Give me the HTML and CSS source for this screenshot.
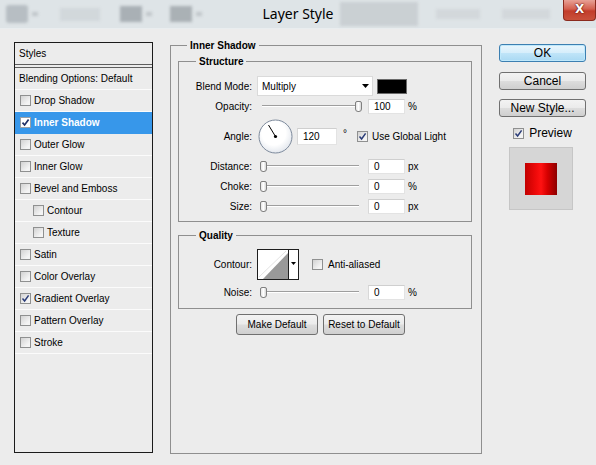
FILE: index.html
```html
<!DOCTYPE html>
<html>
<head>
<meta charset="utf-8">
<title>Layer Style</title>
<link rel="stylesheet" href="styles.css">
</head>
<body>
<div class="titlebar">
  <div class="tb-side tb-left">
    <span class="blur ic1"></span><span class="blur ar"></span>
    <span class="blur f1"></span>
    <span class="blur b1"></span><span class="blur ar"></span>
    <span class="blur b2"></span><span class="blur ar"></span>
  </div>
  <div class="tb-title">Layer Style</div>
  <div class="tb-side tb-right">
    <span class="blur r1"></span>
    <span class="blur r2"></span>
    <span class="blur r3"></span>
    <div class="tb-close">X</div>
  </div>
</div>

<div class="dialog">
  <div class="styles-list">
    <div class="list-head">Styles</div>
    <div class="list-body">
      <div class="row plain">Blending Options: Default</div>
      <div class="row"><span class="cb"></span>Drop Shadow</div>
      <div class="row active"><span class="cb on"><svg viewBox="0 0 9 9" width="9" height="9"><path d="M1.5 4.6 L3.6 7 L7.6 1.4" fill="none" stroke="#1f2f66" stroke-width="1.7"/></svg></span>Inner Shadow</div>
      <div class="row"><span class="cb"></span>Outer Glow</div>
      <div class="row"><span class="cb"></span>Inner Glow</div>
      <div class="row"><span class="cb"></span>Bevel and Emboss</div>
      <div class="row sub"><span class="cb"></span>Contour</div>
      <div class="row sub"><span class="cb"></span>Texture</div>
      <div class="row"><span class="cb"></span>Satin</div>
      <div class="row"><span class="cb"></span>Color Overlay</div>
      <div class="row"><span class="cb"><svg viewBox="0 0 9 9" width="9" height="9"><path d="M1.5 4.6 L3.6 7 L7.6 1.4" fill="none" stroke="#2a3c78" stroke-width="1.5"/></svg></span>Gradient Overlay</div>
      <div class="row"><span class="cb"></span>Pattern Overlay</div>
      <div class="row"><span class="cb"></span>Stroke</div>
    </div>
  </div>

  <fieldset class="group main">
    <legend class="lg-main">Inner Shadow</legend>

    <fieldset class="group structure">
      <legend>Structure</legend>
      <div class="f-row r-first">
        <span class="lbl">Blend Mode:</span>
        <div class="select"><span>Multiply</span><svg class="dd" width="7" height="4" viewBox="0 0 7 4"><polygon points="0,0 7,0 3.5,4" fill="#000"/></svg></div>
        <span class="swatch"></span>
      </div>
      <div class="f-row">
        <span class="lbl">Opacity:</span>
        <div class="slider"><span class="thumb max"></span></div>
        <span class="num">100</span><span class="unit">%</span>
      </div>
      <div class="f-row r-angle">
        <span class="lbl">Angle:</span>
        <svg class="dial" width="35" height="35" viewBox="0 0 35 35">
          <defs><radialGradient id="dg" cx="0.45" cy="0.4" r="0.6"><stop offset="0.6" stop-color="#ffffff"/><stop offset="1" stop-color="#e4e8ee"/></radialGradient></defs>
          <circle cx="17.5" cy="17.5" r="16.5" fill="url(#dg)" stroke="#7d8a9c" stroke-width="1"/>
          <line x1="17.5" y1="17.5" x2="10.5" y2="6" stroke="#000" stroke-width="1"/>
          <circle cx="17.5" cy="17.5" r="1.6" fill="#000"/>
        </svg>
        <span class="num angle">120</span>
        <span class="deg">°</span>
        <span class="cb gl"><svg viewBox="0 0 9 9" width="9" height="9"><path d="M1.5 4.6 L3.6 7 L7.6 1.4" fill="none" stroke="#2a3c78" stroke-width="1.5"/></svg></span>
        <span class="cb-text">Use Global Light</span>
      </div>
      <div class="f-row">
        <span class="lbl">Distance:</span>
        <div class="slider"><span class="thumb min"></span></div>
        <span class="num">0</span><span class="unit">px</span>
      </div>
      <div class="f-row">
        <span class="lbl">Choke:</span>
        <div class="slider"><span class="thumb min"></span></div>
        <span class="num">0</span><span class="unit">%</span>
      </div>
      <div class="f-row">
        <span class="lbl">Size:</span>
        <div class="slider"><span class="thumb min"></span></div>
        <span class="num">0</span><span class="unit">px</span>
      </div>
    </fieldset>

    <fieldset class="group quality">
      <legend>Quality</legend>
      <div class="f-row r-contour">
        <span class="lbl">Contour:</span>
        <svg class="contour" width="42" height="31" viewBox="0 0 42 31">
          <rect x="0.5" y="0.5" width="41" height="30" fill="#fff" stroke="#1e1e1e"/>
          <line x1="2" y1="28" x2="29" y2="2" stroke="#e2e2e2" stroke-width="1"/>
          <polygon points="6,30 31,4 31,30" fill="#999"/>
          <line x1="31.5" y1="1" x2="31.5" y2="30" stroke="#1e1e1e"/>
          <polygon points="34,13 39,13 36.5,16" fill="#000"/>
        </svg>
        <span class="cb aa"></span>
        <span class="cb-text">Anti-aliased</span>
      </div>
      <div class="f-row r-noise">
        <span class="lbl">Noise:</span>
        <div class="slider"><span class="thumb min"></span></div>
        <span class="num">0</span><span class="unit">%</span>
      </div>
    </fieldset>

    <div class="btn-row">
      <button class="btn">Make Default</button>
      <button class="btn">Reset to Default</button>
    </div>
  </fieldset>

  <div class="side">
    <button class="btn sbtn ok">OK</button>
    <button class="btn sbtn cancel">Cancel</button>
    <button class="btn sbtn newst">New Style...</button>
    <div class="preview-row">
      <span class="cb"><svg viewBox="0 0 9 9" width="9" height="9"><path d="M1.5 4.6 L3.6 7 L7.6 1.4" fill="none" stroke="#2a3c78" stroke-width="1.5"/></svg></span>
      <span>Preview</span>
    </div>
    <div class="preview-box"><div class="red"></div></div>
  </div>
</div>
</body>
</html>
```

FILE: styles.css
```css
* { box-sizing: border-box; }
html, body { margin: 0; padding: 0; }
body {
  width: 596px;
  height: 465px;
  overflow: hidden;
  background: #ececec;
  font-family: "Liberation Sans", Arial, sans-serif;
  font-size: 10px;
  color: #000;
}

/* ---------- title bar ---------- */
.titlebar {
  height: 29px;
  display: flex;
  background: #dee4e7;
  border-bottom: 1px solid #e9edef;
}
.tb-side { flex: 1 1 0; display: flex; align-items: center; min-width: 0; }
.tb-title {
  font-family: "Noto Sans", "Open Sans", sans-serif;
  font-size: 14px;
  line-height: 28px;
  color: #000;
  white-space: nowrap;
}
.blur { flex: none; filter: blur(1.6px); display: block; }
.ic1 { width: 22px; height: 18px; background: #b7bec3; margin-left: 6px; border-radius: 3px; }
.ar { width: 6px; height: 4px; background: #bfc5c9; margin-left: 4px; }
.f1 { width: 40px; height: 13px; background: #d2d8db; margin-left: 22px; }
.b1 { width: 22px; height: 16px; background: #a9b0b5; margin-left: 20px; }
.b2 { width: 22px; height: 16px; background: #aab1b5; margin-left: 18px; }
.r1 { width: 78px; height: 24px; background: #cad0d3; margin-left: 6px; }
.r2 { width: 44px; height: 10px; background: #d3d8db; margin-left: 18px; }
.r3 { width: 48px; height: 10px; background: #d3d8db; margin-left: 22px; }
.tb-close {
  margin-left: auto;
  align-self: flex-start;
  flex: none;
  width: 33px;
  height: 21px;
  border: 1px solid #8a2a1e;
  border-top: 0;
  border-radius: 0 0 4px 4px;
  background: linear-gradient(#e8a196, #d4604f 45%, #c23d2b 55%, #c9513b);
  color: #fff;
  font-family: "DejaVu Sans", sans-serif;
  font-weight: bold;
  font-size: 12px;
  line-height: 19px;
  text-align: center;
  text-shadow: 0 0 2px #5a0e06, 0 0 1px #5a0e06;
}

/* ---------- dialog layout ---------- */
.dialog { display: flex; align-items: flex-start; padding-left: 14px; }

/* ---------- styles list ---------- */
.styles-list {
  margin-top: 13px;
  width: 139px;
  height: 411px;
  border: 1px solid #1b1b1b;
  background: #ececec;
  flex: none;
}
.list-head {
  height: 22px;
  line-height: 21px;
  padding-left: 4px;
  border-bottom: 1px solid #5e5e5e;
}
.list-body { margin-top: 2px; border-top: 1px solid #5e5e5e; }
.row {
  height: 22px;
  border-bottom: 1px solid #fbfbfb;
  display: flex;
  align-items: center;
  gap: 3px;
  padding-left: 5px;
  white-space: nowrap;
}
.row.plain { padding-left: 4px; }
.row.sub { padding-left: 18px; }
.row.active { background: #3797ea; color: #fff; font-weight: bold; border-bottom-color: #3797ea; }

.cb {
  flex: none;
  width: 11px;
  height: 11px;
  border: 1px solid #8f9090;
  background: linear-gradient(135deg, #d2d2d2, #f4f4f4 75%);
  display: flex;
  align-items: center;
  justify-content: center;
}
.cb svg { display: block; }
.cb.on { background: #fff; border-color: #9aa0a6; }

/* ---------- fieldsets ---------- */
.group {
  margin: 0;
  padding: 0;
  border: 1px solid #8f8f8f;
  min-width: 0;
}
.group > legend {
  padding: 0 3px;
  margin-left: 17px;
  line-height: 13px;
  font-weight: bold;
  font-size: 10px;
}
.main {
  flex: none;
  margin: 10px 0 0 17px;
  width: 312px;
  height: 415px;
  padding: 0 9px 0 7px;
}
.group > legend.lg-main { margin-left: 9px; }
.structure { margin-top: 3px; padding-bottom: 5px; }
.quality { margin-top: 7px; padding-bottom: 6px; }

.f-row { display: flex; align-items: center; height: 20px; white-space: nowrap; }
.r-first { margin-top: 8px; }
.r-angle { height: 40px; }
.r-contour { margin-top: 7px; height: 31px; }
.r-noise { margin-top: 2px; }
.lbl { flex: none; width: 73px; margin-right: 5px; text-align: right; }

.select {
  flex: none;
  width: 116px;
  height: 20px;
  background: #fff;
  border: 1px solid #dadada;
  display: flex;
  align-items: center;
  padding-left: 4px;
}
.select .dd { margin-left: auto; margin-right: 3px; display: block; }
.swatch {
  flex: none;
  width: 30px;
  height: 15px;
  margin-left: 4px;
  background: #000;
  border: 1px solid #6a6a6a;
}

.slider {
  flex: none;
  width: 104px;
  height: 20px;
  margin-left: 2px;
  display: flex;
  align-items: center;
  background:
    linear-gradient(#9e9e9e, #9e9e9e) 3px 9px / 97px 1px no-repeat,
    linear-gradient(#ffffff, #ffffff) 3px 10px / 97px 1px no-repeat;
}
.thumb {
  flex: none;
  width: 7px;
  height: 11px;
  border: 1px solid #808080;
  border-radius: 2px 2px 3px 3px;
  background: linear-gradient(90deg, #e6e6e6, #ffffff 50%, #d6d6d6);
}
.thumb.min { margin-left: 1px; }
.thumb.max { margin-left: auto; margin-right: 1px; }

.num {
  flex: none;
  width: 37px;
  height: 15px;
  margin-left: 5px;
  padding-left: 5px;
  line-height: 13px;
  background: #fff;
  border: 1px solid #e3e3e3;
  border-top-color: #cfcfcf;
  border-left-color: #d8d8d8;
}
.unit { margin-left: 3px; }

.dial { flex: none; display: block; margin-left: 1px; }
.num.angle { width: 40px; height: 17px; line-height: 15px; margin-left: 4px; }
.deg { margin-left: 6px; font-size: 10px; position: relative; top: -3px; }
.cb.gl { margin-left: 10px; }
.cb-text { margin-left: 4px; }

.contour { flex: none; display: block; }
.cb.aa { margin-left: 13px; }
.cb.aa + .cb-text { margin-left: 5px; }

/* ---------- buttons ---------- */
.btn {
  font: inherit;
  color: #000;
  padding: 0;
  margin: 0;
  border: 1px solid #707070;
  border-radius: 3px;
  background: linear-gradient(#f3f3f3, #ebebeb 48%, #dddddd 52%, #cfcfcf);
  display: flex;
  align-items: center;
  justify-content: center;
  white-space: nowrap;
}
.btn-row { display: flex; gap: 5px; margin: 5px 0 0 58px; }
.btn-row .btn { width: 82px; height: 21px; }

.side {
  flex: none;
  margin: 15px 0 0 17px;
  width: 87px;
  display: flex;
  flex-direction: column;
  align-items: center;
}
.sbtn { width: 87px; height: 18px; font-size: 12px; }
.ok {
  border-color: #3c7fb1;
  background: linear-gradient(#e9f6fd, #d6eefb 48%, #bfe4f8 52%, #a9d9f3);
  box-shadow: inset 0 0 0 1px #bfe8fb;
}
.cancel { margin-top: 10px; }
.newst { margin-top: 9px; }
.preview-row {
  margin-top: 8px;
  height: 16px;
  display: flex;
  align-items: center;
  gap: 5px;
  font-size: 12px;
}
.preview-box {
  align-self: flex-start;
  margin: 6px 0 0 10px;
  width: 64px;
  height: 63px;
  background: #d6d6d6;
  border: 1px solid #c6c6c6;
  display: flex;
  align-items: center;
  justify-content: center;
}
.red {
  width: 32px;
  height: 32px;
  background: linear-gradient(90deg, #c20000, #f00a0a 35%, #ff1212 50%, #d60000 70%, #8c0000);
}
```
